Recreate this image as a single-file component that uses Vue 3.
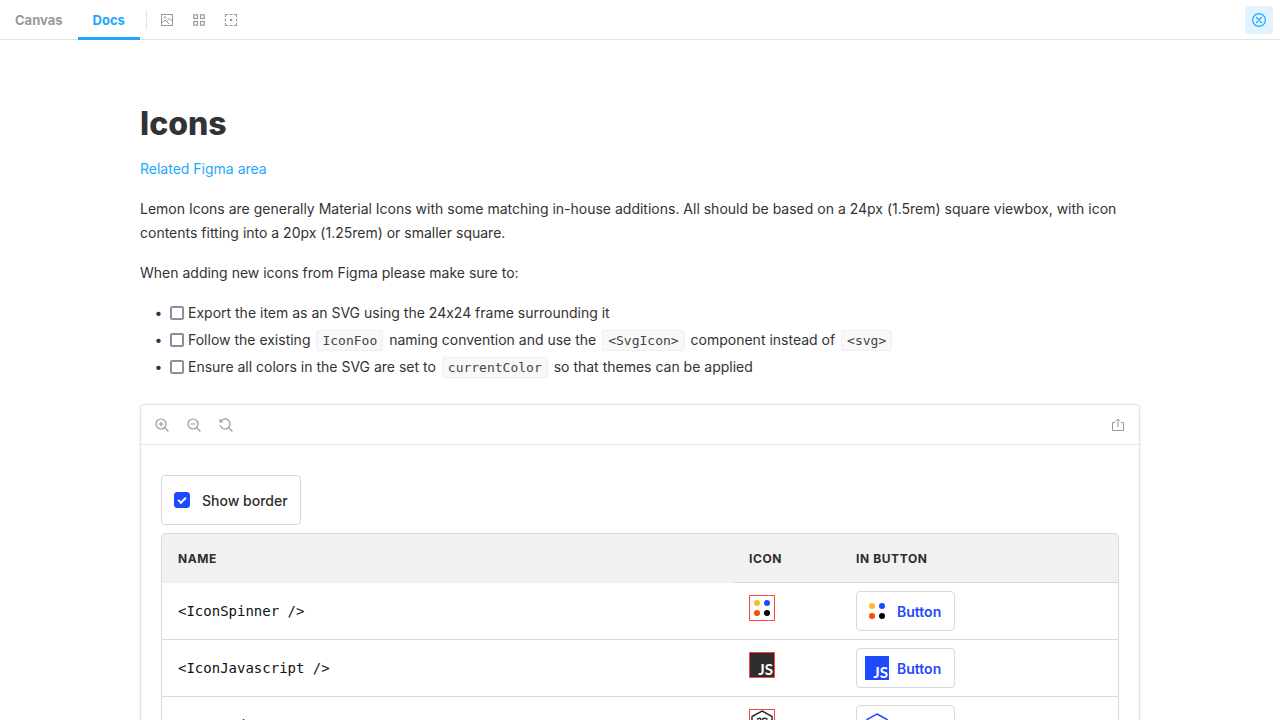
<script setup>
import { ref } from 'vue'

const showBorder = ref(true)
const icons = [
  { name: 'IconSpinner', kind: 'spinner' },
  { name: 'IconJavascript', kind: 'js' },
  { name: 'IconNodeJS', kind: 'node' },
]
const tasks = ref([false, false, false])
</script>

<template>
  <div class="app">
    <header class="topbar">
      <nav class="tabs">
        <a href="#canvas" class="tab">Canvas</a>
        <a href="#docs" class="tab active">Docs</a>
      </nav>
      <span class="separator"></span>
      <div class="tools">
        <button class="tool" aria-label="Change background">
          <svg viewBox="0 0 14 14" fill="none" stroke="currentColor">
            <rect x="1.5" y="1.5" width="11" height="11" />
            <circle cx="5" cy="4.3" r="1" stroke-width=".6" />
            <path d="M1.7 10 5 7l4 4M6.600 8.400l2.900-3 3 3" />
          </svg>
        </button>
        <button class="tool" aria-label="Apply grid">
          <svg viewBox="0 0 14 14" fill="none" stroke="currentColor" stroke-width="1.200">
            <rect x="1.8" y="1.8" width="3.700" height="3.700" /><rect x="8.5" y="1.8" width="3.700" height="3.700" />
            <rect x="1.8" y="8.5" width="3.700" height="3.700" /><rect x="8.5" y="8.5" width="3.700" height="3.700" />
          </svg>
        </button>
        <button class="tool" aria-label="Apply outlines">
          <svg viewBox="0 0 14 14" fill="none" stroke="currentColor" stroke-width="1.200">
            <path d="M1.5 4V1.5H4M10 1.5h2.500V4M12.500 10v2.500H10M4 12.500H1.500V10M5.500 1.500h3M5.500 12.500h3M1.500 5.500v3M12.500 5.500v3" />
            <rect x="6.5" y="6.500" width="1" height="1" />
          </svg>
        </button>
      </div>
      <button class="tool close" aria-label="Close">
        <svg viewBox="0 0 14 14" fill="none" stroke="currentColor" stroke-width="1.200" stroke-linecap="round">
          <circle cx="7" cy="7" r="6.400" /><path d="m4.500 4.500 5 5m0-5-5 5" />
        </svg>
      </button>
    </header>

    <main class="docs">
      <article class="content">
        <h1>Icons</h1>
        <p><a href="#figma">Related Figma area</a></p>
        <p>Lemon Icons are generally Material Icons with some matching in-house additions. All should be based on a 24px (1.5rem) square viewbox, with icon contents fitting into a 20px (1.25rem) or smaller square.</p>
        <p>When adding new icons from Figma please make sure to:</p>
        <ul class="tasks">
          <li><label><input v-model="tasks[0]" type="checkbox">Export the item as an SVG using the 24x24 frame surrounding it</label></li>
          <li><label><input v-model="tasks[1]" type="checkbox">Follow the existing <code>IconFoo</code> naming convention and use the <code>&lt;SvgIcon&gt;</code> component instead of <code>&lt;svg&gt;</code></label></li>
          <li><label><input v-model="tasks[2]" type="checkbox">Ensure all colors in the SVG are set to <code>currentColor</code> so that themes can be applied</label></li>
        </ul>

        <section class="preview">
          <div class="preview-bar">
            <button class="tool" aria-label="Zoom in">
              <svg viewBox="0 0 14 14" fill="none" stroke="currentColor" stroke-width="1.200" stroke-linecap="round">
                <circle cx="6" cy="6" r="5" /><path d="M4 6h4M6 4v4M9.800 9.800 13 13" />
              </svg>
            </button>
            <button class="tool" aria-label="Zoom out">
              <svg viewBox="0 0 14 14" fill="none" stroke="currentColor" stroke-width="1.200" stroke-linecap="round">
                <circle cx="6" cy="6" r="5" /><path d="M4 6h4M9.800 9.800 13 13" />
              </svg>
            </button>
            <button class="tool" aria-label="Reset zoom">
              <svg viewBox="0 0 14 14" fill="none" stroke="currentColor" stroke-width="1.200" stroke-linecap="round" stroke-linejoin="round">
                <path d="M1 1.500V4h2.500M1.600 3.600A5 5 0 1 1 1.300 7.700M9.800 9.800 13 13" />
              </svg>
            </button>
            <button class="tool share" aria-label="Open canvas in new tab">
              <svg viewBox="0 0 14 14" fill="none" stroke="currentColor">
                <path d="M4 4.500H1.500v8h11v-8H10" /><path d="M7 1.500V9M5 3.200 7 1.200l2 2" />
              </svg>
            </button>
          </div>

          <div class="story">
            <label class="toggle"><input v-model="showBorder" type="checkbox">Show border</label>
            <div class="table-frame">
              <table>
                <colgroup><col><col class="col-icon"><col class="col-button"></colgroup>
                <thead>
                  <tr><th>NAME</th><th>ICON</th><th>IN BUTTON</th></tr>
                </thead>
                <tbody>
                  <tr v-for="icon in icons" :key="icon.name">
                    <td class="name">&lt;{{ icon.name }} /&gt;</td>
                    <td v-for="place in ['plain', 'button']" :key="place">
                      <component :is="place === 'button' ? 'button' : 'span'" :class="place === 'button' ? 'lemon-button' : ['icon-box', { bordered: showBorder }]">
                        <svg class="glyph" viewBox="0 0 24 24" aria-hidden="true">
                          <g v-if="icon.kind === 'spinner'">
                            <circle cx="7" cy="7" r="3" fill="#f9bd2b" /><circle cx="17" cy="7" r="3" fill="#1d4aff" />
                            <circle cx="7" cy="17" r="3" fill="#f54e00" /><circle cx="17" cy="17" r="3" fill="#000" />
                          </g>
                          <g v-else-if="icon.kind === 'js'">
                            <rect width="24" height="24" fill="currentColor" />
                            <text x="23" y="22" text-anchor="end" class="js-text">JS</text>
                          </g>
                          <g v-else fill="none" stroke="currentColor" stroke-width="1.500">
                            <path d="m12 1 10 5.500v11L12 23 2 17.500v-11Z" />
                            <path d="M10.500 8v7c0 2-1 2.500-3.500 1.500M7 9.500q1.500-2 3.500-1M17.500 9.500C16 7.500 12.500 8 12.500 10s5 1.500 5 4-4.500 2.500-5.500.500" />
                          </g>
                        </svg>
                        <span v-if="place === 'button'">Button</span>
                      </component>
                    </td>
                  </tr>
                </tbody>
              </table>
            </div>
          </div>
        </section>
      </article>
    </main>
  </div>
</template>

<style>
body { background: #fff; }
</style>

<style scoped>
.app {
  display: flex;
  flex-direction: column;
  height: 100vh;
  font-family: Inter, "Liberation Sans", sans-serif;
  font-size: 14px;
  font-feature-settings: "calt" 0;
  color: #333;
}
.app *, .app *::before, .app *::after { box-sizing: border-box; }
button { font: inherit; cursor: pointer; }

.topbar {
  display: flex;
  align-items: center;
  flex: none;
  height: 40px;
  padding-right: 7px;
  box-shadow: inset 0 -1px #e3e3e3;
}
.tabs { display: flex; align-self: stretch; }
.tab {
  display: flex;
  align-items: center;
  padding: 0 15px;
  border-top: 3px solid transparent;
  border-bottom: 3px solid transparent;
  font-size: 13px;
  font-weight: 700;
  color: #999;
  text-decoration: none;
}
.tab.active { color: #1ea7fd; border-bottom-color: #1ea7fd; }
.separator { width: 1px; height: 20px; margin: 0 6px; background: #e3e3e3; }
.tools { display: flex; gap: 4px; }
.tool {
  display: flex;
  align-items: center;
  justify-content: center;
  width: 28px;
  height: 28px;
  padding: 0;
  border: 0;
  border-radius: 4px;
  background: none;
  color: #999;
}
.tool svg { width: 14px; height: 14px; }
.close { margin-left: auto; background: #e1f3ff; color: #1ea7fd; }

.docs { flex: 1; min-height: 0; overflow-y: auto; scrollbar-width: none; padding: 64px 20px; }
.content { max-width: 1000px; margin: 0 auto; }
h1 { margin: 0 0 13px; font-size: 32px; line-height: 40px; font-weight: 800; }
p { margin: 0 0 16px; line-height: 24px; }
p a { color: #1ea7fd; text-decoration: none; }
.tasks { margin: 0 0 25px; padding-left: 30px; line-height: 24px; list-style-type: "•  "; }
.tasks li + li { margin-top: 3px; }
.tasks input {
  appearance: none;
  width: 14px;
  height: 14px;
  margin: 0 4px 0 0;
  border: 2px solid #8f8d9c;
  border-radius: 2px;
  vertical-align: -2px;
}
.tasks input:checked { background: #8f8d9c; }
code {
  display: inline-block;
  margin: 0 2px;
  padding: 3px 5px;
  border: 1px solid #eee;
  border-radius: 3px;
  background: #f8f8f8;
  font-family: "DejaVu Sans Mono", monospace;
  font-size: 13px;
  line-height: 13px;
  color: #444;
}

.preview {
  border: 1px solid #e3e3e3;
  border-radius: 4px;
  box-shadow: 0 1px 3px rgba(0, 0, 0, 0.1);
}
.preview-bar {
  display: flex;
  align-items: center;
  gap: 4px;
  height: 40px;
  padding: 0 7px;
  border-bottom: 1px solid #e3e3e3;
}
.share { margin-left: auto; }
.story { padding: 30px 20px; color: #2d2d2d; }
.toggle {
  display: flex;
  align-items: center;
  gap: 12px;
  width: fit-content;
  height: 50px;
  margin-bottom: 8px;
  padding: 0 12px;
  border: 1px solid #d9d9d9;
  border-radius: 4px;
  font-weight: 500;
}
.toggle input {
  appearance: none;
  display: grid;
  place-items: center;
  width: 16px;
  height: 16px;
  margin: 0;
  border: 1px solid #1d4aff;
  border-radius: 3px;
}
.toggle input:checked { background: #1d4aff; }
.toggle input:checked::before {
  content: "";
  width: 8px;
  height: 5px;
  margin-bottom: 2px;
  border: solid #fff;
  border-width: 0 0 2px 2px;
  transform: rotate(-45deg);
}

.table-frame { border: 1px solid #d9d9d9; border-radius: 4px; overflow: hidden; }
table { width: 100%; table-layout: fixed; border-collapse: separate; border-spacing: 0; }
.col-icon { width: 107px; }
.col-button { width: 278px; }
th {
  height: 49px;
  padding: 0 16px;
  background: #f1f1f1;
  border-bottom: 1px solid #d9d9d9;
  font-size: 12px;
  font-weight: 700;
  letter-spacing: 0.05em;
  text-align: left;
}
th:first-child { border-bottom-color: #f1f1f1; }
td { height: 57px; padding: 8px 16px; border-bottom: 1px solid #d9d9d9; vertical-align: middle; }
.name { font-family: "DejaVu Sans Mono", monospace; color: #111; }
.icon-box { display: flex; width: 26px; height: 26px; margin-bottom: 6px; padding: 1px; }
.icon-box.bordered { padding: 0; border: 1px solid #f44; }
.glyph { display: block; width: 24px; height: 24px; flex: none; }
.js-text { fill: #fff; font-family: Lato, sans-serif; font-size: 15px; font-weight: 700; }
.lemon-button {
  display: flex;
  align-items: center;
  gap: 8px;
  height: 40px;
  padding: 0 13px 0 8px;
  border: 1px solid #d9d9d9;
  border-radius: 4px;
  background: #fff;
  color: #1d4aff;
  font-weight: 600;
}
</style>
